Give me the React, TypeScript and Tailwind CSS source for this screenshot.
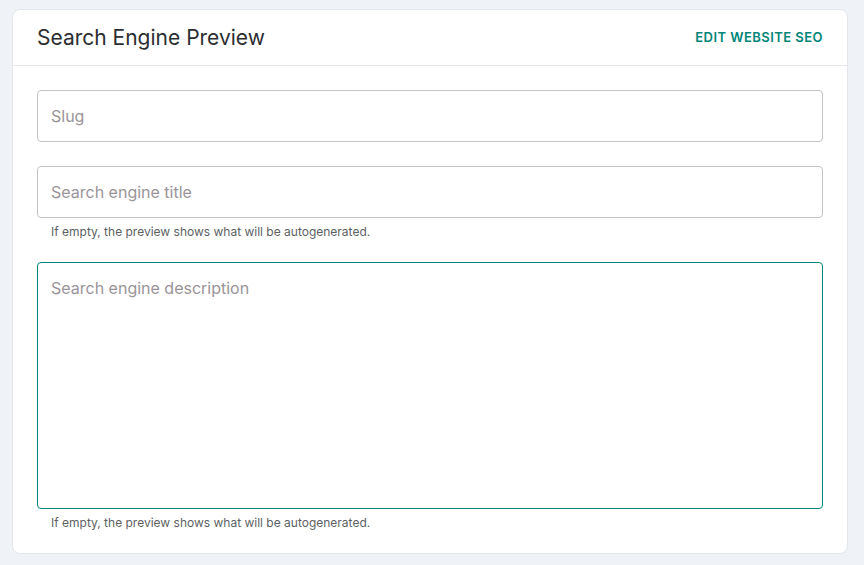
export default function App() {
  return (
    <div className="min-h-[565px] bg-[#eff3f7] pl-3 pr-4 pt-[9px] pb-3 font-['Inter',sans-serif]">
      <div className="w-[836px] rounded-lg border border-[#e3e6ea] bg-white">
        {/* header */}
        <div className="flex h-[56px] items-center justify-between border-b border-[#e6e8eb] px-6">
          <h2 className="text-[21px] font-normal text-[#2b2d31]">Search Engine Preview</h2>
          <a className="text-[13px] font-semibold tracking-[0.45px] text-[#00857a]" href="#">
            EDIT WEBSITE SEO
          </a>
        </div>

        {/* fields */}
        <div className="flex flex-col px-6 pt-6 pb-[22px]">
          <input
            className="h-[52px] w-full rounded-[4px] border border-[#c4c4c4] px-[13px] text-[16px] text-[#2b2d31] outline-none placeholder:text-[#9a9498]"
            placeholder="Slug"
          />
          <input
            className="mt-6 h-[52px] w-full rounded-[4px] border border-[#c4c4c4] px-[13px] text-[16px] text-[#2b2d31] outline-none placeholder:text-[#9a9498]"
            placeholder="Search engine title"
          />
          <p className="mt-[6px] px-[14px] text-[12px] leading-4 text-[#5d5f63]">
            If empty, the preview shows what will be autogenerated.
          </p>
          <textarea
            className="mt-[22px] h-[247px] w-full resize-none rounded-[4px] border border-[#00857a] px-[13px] pt-[15px] pb-4 text-[16px] leading-5 text-[#2b2d31] outline-none placeholder:text-[#9a9498]"
            placeholder="Search engine description"
          />
          <p className="mt-[6px] px-[14px] text-[12px] leading-4 text-[#5d5f63]">
            If empty, the preview shows what will be autogenerated.
          </p>
        </div>
      </div>
    </div>
  )
}
